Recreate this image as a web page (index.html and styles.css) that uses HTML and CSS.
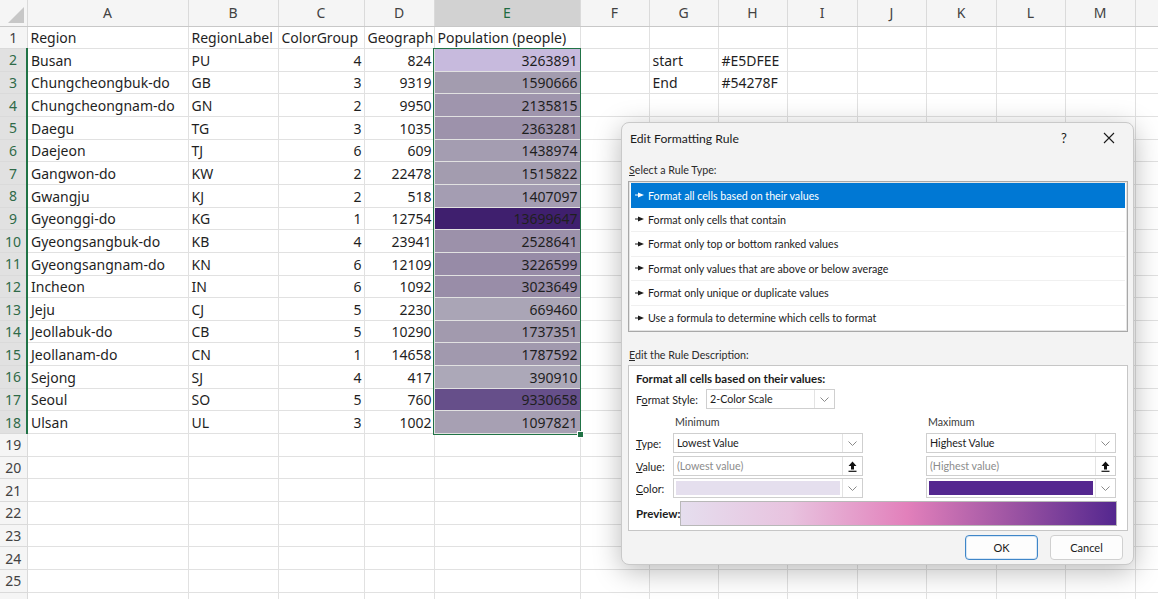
FILE: index.html
```html
<!DOCTYPE html>
<html>
<head>
<meta charset="utf-8">
<link rel="stylesheet" href="styles.css">
</head>
<body>
<div class="app">
<table class="sheet">
<colgroup>
<col class="c-rh"><col class="c-a"><col class="c-b"><col class="c-c"><col class="c-d"><col class="c-e"><col class="c-s"><col class="c-s"><col class="c-s"><col class="c-t"><col class="c-s"><col class="c-t"><col class="c-s"><col class="c-t"><col class="c-s">
</colgroup>
<tr class="hdr"><th class="corner"><span class="tri"></span></th><th>A</th><th>B</th><th>C</th><th>D</th><th class="hsel">E</th><th>F</th><th>G</th><th>H</th><th>I</th><th>J</th><th>K</th><th>L</th><th>M</th><th></th></tr>
<tr><th>1</th><td>Region</td><td>RegionLabel</td><td>ColorGroup</td><td><span class="clipin">Geographi</span></td><td>Population (people)</td><td></td><td></td><td></td><td></td><td></td><td></td><td></td><td></td><td></td></tr>
<tr><th class="rs">2</th><td>Busan</td><td>PU</td><td class="n">4</td><td class="n">824</td><td class="n" style="background:#c7badd">3263891</td><td></td><td>start</td><td>#E5DFEE</td><td></td><td></td><td></td><td></td><td></td><td></td></tr>
<tr><th class="rs">3</th><td>Chungcheongbuk-do</td><td>GB</td><td class="n">3</td><td class="n">9319</td><td class="n" style="background:#a39caf">1590666</td><td></td><td>End</td><td>#54278F</td><td></td><td></td><td></td><td></td><td></td><td></td></tr>
<tr><th class="rs">4</th><td>Chungcheongnam-do</td><td>GN</td><td class="n">2</td><td class="n">9950</td><td class="n" style="background:#9f95ad">2135815</td><td></td><td></td><td></td><td></td><td></td><td></td><td></td><td></td><td></td></tr>
<tr><th class="rs">5</th><td>Daegu</td><td>TG</td><td class="n">3</td><td class="n">1035</td><td class="n" style="background:#9d92ab">2363281</td><td></td><td></td><td></td><td></td><td></td><td></td><td></td><td></td><td></td></tr>
<tr><th class="rs">6</th><td>Daejeon</td><td>TJ</td><td class="n">6</td><td class="n">609</td><td class="n" style="background:#a49db1">1438974</td><td></td><td></td><td></td><td></td><td></td><td></td><td></td><td></td><td></td></tr>
<tr><th class="rs">7</th><td>Gangwon-do</td><td>KW</td><td class="n">2</td><td class="n">22478</td><td class="n" style="background:#a39caf">1515822</td><td></td><td></td><td></td><td></td><td></td><td></td><td></td><td></td><td></td></tr>
<tr><th class="rs">8</th><td>Gwangju</td><td>KJ</td><td class="n">2</td><td class="n">518</td><td class="n" style="background:#a49db2">1407097</td><td></td><td></td><td></td><td></td><td></td><td></td><td></td><td></td><td></td></tr>
<tr><th class="rs">9</th><td>Gyeonggi-do</td><td>KG</td><td class="n">1</td><td class="n">12754</td><td class="n" style="background:#3f1f6e">13699647</td><td></td><td></td><td></td><td></td><td></td><td></td><td></td><td></td><td></td></tr>
<tr><th class="rs">10</th><td>Gyeongsangbuk-do</td><td>KB</td><td class="n">4</td><td class="n">23941</td><td class="n" style="background:#9c91aa">2528641</td><td></td><td></td><td></td><td></td><td></td><td></td><td></td><td></td><td></td></tr>
<tr><th class="rs">11</th><td>Gyeongsangnam-do</td><td>KN</td><td class="n">6</td><td class="n">12109</td><td class="n" style="background:#978ba7">3226599</td><td></td><td></td><td></td><td></td><td></td><td></td><td></td><td></td><td></td></tr>
<tr><th class="rs">12</th><td>Incheon</td><td>IN</td><td class="n">6</td><td class="n">1092</td><td class="n" style="background:#998da8">3023649</td><td></td><td></td><td></td><td></td><td></td><td></td><td></td><td></td><td></td></tr>
<tr><th class="rs">13</th><td>Jeju</td><td>CJ</td><td class="n">5</td><td class="n">2230</td><td class="n" style="background:#aaa5b6">669460</td><td></td><td></td><td></td><td></td><td></td><td></td><td></td><td></td><td></td></tr>
<tr><th class="rs">14</th><td>Jeollabuk-do</td><td>CB</td><td class="n">5</td><td class="n">10290</td><td class="n" style="background:#a29aae">1737351</td><td></td><td></td><td></td><td></td><td></td><td></td><td></td><td></td><td></td></tr>
<tr><th class="rs">15</th><td>Jeollanam-do</td><td>CN</td><td class="n">1</td><td class="n">14658</td><td class="n" style="background:#a199ae">1787592</td><td></td><td></td><td></td><td></td><td></td><td></td><td></td><td></td><td></td></tr>
<tr><th class="rs">16</th><td>Sejong</td><td>SJ</td><td class="n">4</td><td class="n">417</td><td class="n" style="background:#aca8b8">390910</td><td></td><td></td><td></td><td></td><td></td><td></td><td></td><td></td><td></td></tr>
<tr><th class="rs">17</th><td>Seoul</td><td>SO</td><td class="n">5</td><td class="n">760</td><td class="n" style="background:#664f8a">9330658</td><td></td><td></td><td></td><td></td><td></td><td></td><td></td><td></td><td></td></tr>
<tr><th class="rs">18</th><td>Ulsan</td><td>UL</td><td class="n">3</td><td class="n">1002</td><td class="n" style="background:#a7a0b3">1097821</td><td></td><td></td><td></td><td></td><td></td><td></td><td></td><td></td><td></td></tr>
<tr><th>19</th><td></td><td></td><td></td><td></td><td></td><td></td><td></td><td></td><td></td><td></td><td></td><td></td><td></td><td></td></tr>
<tr><th>20</th><td></td><td></td><td></td><td></td><td></td><td></td><td></td><td></td><td></td><td></td><td></td><td></td><td></td><td></td></tr>
<tr><th>21</th><td></td><td></td><td></td><td></td><td></td><td></td><td></td><td></td><td></td><td></td><td></td><td></td><td></td><td></td></tr>
<tr><th>22</th><td></td><td></td><td></td><td></td><td></td><td></td><td></td><td></td><td></td><td></td><td></td><td></td><td></td><td></td></tr>
<tr><th>23</th><td></td><td></td><td></td><td></td><td></td><td></td><td></td><td></td><td></td><td></td><td></td><td></td><td></td><td></td></tr>
<tr><th>24</th><td></td><td></td><td></td><td></td><td></td><td></td><td></td><td></td><td></td><td></td><td></td><td></td><td></td><td></td></tr>
<tr><th>25</th><td></td><td></td><td></td><td></td><td></td><td></td><td></td><td></td><td></td><td></td><td></td><td></td><td></td><td></td></tr>
<tr><th></th><td></td><td></td><td></td><td></td><td></td><td></td><td></td><td></td><td></td><td></td><td></td><td></td><td></td><td></td></tr>
</table>

<div class="selection"><span class="handle"></span></div>

<div class="dialog">
  <div class="titlebar">
    <span class="title">Edit Formatting Rule</span>
    <span class="help">?</span>
    <svg class="close" width="12" height="12" viewBox="0 0 12 12"><path d="M1 1L11 11M11 1L1 11" stroke="#1a1a1a" stroke-width="1.1" fill="none"/></svg>
  </div>
  <div class="body">
    <div class="label"><u>S</u>elect a Rule Type:</div>
    <div class="list">
      <div class="item active"><svg class="arr" width="9" height="6" viewBox="0 0 9 6"><path d="M0 3H4" stroke="currentColor" stroke-width="1"/><path d="M3 0.6L9 3L3 5.4Z" fill="currentColor"/></svg>Format all cells based on their values</div>
      <div class="item"><svg class="arr" width="9" height="6" viewBox="0 0 9 6"><path d="M0 3H4" stroke="currentColor" stroke-width="1"/><path d="M3 0.6L9 3L3 5.4Z" fill="currentColor"/></svg>Format only cells that contain</div>
      <div class="item"><svg class="arr" width="9" height="6" viewBox="0 0 9 6"><path d="M0 3H4" stroke="currentColor" stroke-width="1"/><path d="M3 0.6L9 3L3 5.4Z" fill="currentColor"/></svg>Format only top or bottom ranked values</div>
      <div class="item"><svg class="arr" width="9" height="6" viewBox="0 0 9 6"><path d="M0 3H4" stroke="currentColor" stroke-width="1"/><path d="M3 0.6L9 3L3 5.4Z" fill="currentColor"/></svg>Format only values that are above or below average</div>
      <div class="item"><svg class="arr" width="9" height="6" viewBox="0 0 9 6"><path d="M0 3H4" stroke="currentColor" stroke-width="1"/><path d="M3 0.6L9 3L3 5.4Z" fill="currentColor"/></svg>Format only unique or duplicate values</div>
      <div class="item last"><svg class="arr" width="9" height="6" viewBox="0 0 9 6"><path d="M0 3H4" stroke="currentColor" stroke-width="1"/><path d="M3 0.6L9 3L3 5.4Z" fill="currentColor"/></svg>Use a formula to determine which cells to format</div>
    </div>
    <div class="label label2"><u>E</u>dit the Rule Description:</div>
    <div class="desc">
      <div class="heading">Format all cells based on their values:</div>
      <div class="stylerow">
        <span class="flabel">F<u>o</u>rmat Style:</span>
        <div class="combo combo-style"><span class="ctext">2-Color Scale</span><span class="cbtn"><svg width="9" height="5" viewBox="0 0 9 5"><path d="M0.5 0.5L4.5 4.5L8.5 0.5" stroke="#8a8a8a" fill="none" stroke-width="1"/></svg></span></div>
      </div>
      <div class="grid">
        <span></span><span class="colhead">Minimum</span><span></span><span class="colhead">Maximum</span>

        <span class="flabel"><u>T</u>ype:</span>
        <div class="combo"><span class="ctext">Lowest Value</span><span class="cbtn"><svg width="9" height="5" viewBox="0 0 9 5"><path d="M0.5 0.5L4.5 4.5L8.5 0.5" stroke="#8a8a8a" fill="none" stroke-width="1"/></svg></span></div>
        <span></span>
        <div class="combo"><span class="ctext">Highest Value</span><span class="cbtn"><svg width="9" height="5" viewBox="0 0 9 5"><path d="M0.5 0.5L4.5 4.5L8.5 0.5" stroke="#8a8a8a" fill="none" stroke-width="1"/></svg></span></div>

        <span class="flabel"><u>V</u>alue:</span>
        <div class="combo"><span class="ctext ph">(Lowest value)</span><span class="ubtn"><svg width="9" height="11" viewBox="0 0 9 11"><path d="M4.5 0.5L8.5 5H6V8.5H3V5H0.5Z" fill="#111"/><path d="M0.5 10.3H8.5" stroke="#111" stroke-width="1.2"/></svg></span></div>
        <span></span>
        <div class="combo"><span class="ctext ph">(Highest value)</span><span class="ubtn"><svg width="9" height="11" viewBox="0 0 9 11"><path d="M4.5 0.5L8.5 5H6V8.5H3V5H0.5Z" fill="#111"/><path d="M0.5 10.3H8.5" stroke="#111" stroke-width="1.2"/></svg></span></div>

        <span class="flabel"><u>C</u>olor:</span>
        <div class="combo"><span class="swatch sw-min"></span><span class="cbtn"><svg width="9" height="5" viewBox="0 0 9 5"><path d="M0.5 0.5L4.5 4.5L8.5 0.5" stroke="#8a8a8a" fill="none" stroke-width="1"/></svg></span></div>
        <span></span>
        <div class="combo"><span class="swatch sw-max"></span><span class="cbtn"><svg width="9" height="5" viewBox="0 0 9 5"><path d="M0.5 0.5L4.5 4.5L8.5 0.5" stroke="#8a8a8a" fill="none" stroke-width="1"/></svg></span></div>
      </div>
      <div class="preview">
        <span class="plabel">Preview:</span>
        <div class="pbar"></div>
      </div>
    </div>
    <div class="buttons">
      <button class="btn ok">OK</button>
      <button class="btn">Cancel</button>
    </div>
  </div>
</div>
</div>
</body>
</html>
```

FILE: styles.css
```css
html, body {
  margin: 0;
  padding: 0;
  background: #ffffff;
  overflow: hidden;
}
.app {
  position: relative;
  width: 1158px;
  height: 599px;
  overflow: hidden;
  font-family: "Noto Sans", "Open Sans", sans-serif;
}
.sheet {
  border-collapse: collapse;
  table-layout: fixed;
  width: 1165px;
  font-size: 14px;
  color: #1f1f1f;
}
.c-rh { width: 27px; }
.c-a { width: 161px; }
.c-b { width: 90px; }
.c-c { width: 86px; }
.c-d { width: 70px; }
.c-e { width: 146px; }
.c-s { width: 69px; }
.c-t { width: 70px; }
.sheet tr { height: 22.65px; }
.sheet tr.hdr { height: 26px; }
.sheet td {
  border-right: 1px solid #e1e1e1;
  border-bottom: 1px solid #e1e1e1;
  padding: 0 2px 0 3px;
  white-space: nowrap;
  overflow: hidden;
  line-height: 20px;
  vertical-align: bottom;
}
.sheet td.n { text-align: right; }
.clipin {
  display: block;
  width: 66px;
  overflow: hidden;
  white-space: nowrap;
}
.sheet th {
  background: #f5f5f5;
  color: #424242;
  font-weight: normal;
  border-right: 1px solid #dadada;
  border-bottom: 1px solid #dadada;
  padding: 0;
  text-align: center;
  font-size: 14px;
}
.sheet tr.hdr th {
  border-bottom: 1px solid #c8c8c8;
}
.sheet th.corner {
  position: relative;
}
.tri {
  position: absolute;
  right: 3px;
  bottom: 3px;
  width: 0;
  height: 0;
  border-left: 16px solid transparent;
  border-bottom: 16px solid #c7c7c7;
}
.sheet th.hsel {
  background: #d2d2d2;
  color: #1e6b41;
  border-bottom: 2px solid #217346;
}
.sheet th.rs {
  background: #e1e1e1;
  color: #2f6a48;
  border-right: 2px solid #217346;
}
.selection {
  position: absolute;
  left: 433px;
  top: 48px;
  width: 146px;
  height: 385px;
  border: 1px solid #217346;
  pointer-events: none;
}
.handle {
  position: absolute;
  right: -4px;
  bottom: -4px;
  width: 5px;
  height: 5px;
  background: #217346;
  border: 1px solid #ffffff;
}

/* Dialog */
.dialog {
  position: absolute;
  left: 621px;
  top: 122px;
  width: 511px;
  height: 441px;
  background: #f3f3f3;
  border: 1px solid #c9c9c9;
  border-radius: 8px;
  box-shadow: 0 6px 28px rgba(0, 0, 0, 0.28);
  font-family: "Lato", "Noto Sans", sans-serif;
  font-size: 10.7px;
  color: #1b1b1b;
  display: flex;
  flex-direction: column;
}
.titlebar {
  height: 30px;
  display: flex;
  align-items: center;
  padding: 0 0 0 8px;
}
.title {
  font-size: 12.2px;
  flex: 1;
  padding-top: 1px;
}
.help {
  font-size: 13px;
  width: 14px;
  margin-right: 28px;
}
.close {
  margin-right: 18px;
}
.body {
  padding: 0 5px 0 6px;
  display: flex;
  flex-direction: column;
}
.label {
  height: 28px;
  line-height: 18px;
  padding-top: 8px;
  box-sizing: border-box;
  padding-left: 1px;
  color: #2b2b2b;
}
.label u, .flabel u { text-decoration-thickness: 1px; text-underline-offset: 1px; }
.label2 {
  height: 33px;
  padding-top: 14px;
}
.list {
  background: #ffffff;
  border: 1px solid #a8a8a8;
  box-shadow: inset 0 0 0 1px #e4e4e4;
  height: 151px;
  box-sizing: border-box;
  padding: 1px 2px;
  display: flex;
  flex-direction: column;
}
.item {
  height: 24.7px;
  display: flex;
  align-items: center;
  gap: 4px;
  padding-left: 4px;
  border-bottom: 1px solid #f0f0f0;
  box-sizing: border-box;
  color: #1b1b1b;
}
.item.last { border-bottom: none; }
.item.active {
  background: #0078d4;
  color: #ffffff;
  border-bottom: none;
}
.arr { flex: none; }
.desc {
  background: #ffffff;
  border: 1px solid #c6c6c6;
  height: 166px;
  box-sizing: border-box;
  padding: 5px 10px 0 7px;
  display: flex;
  flex-direction: column;
}
.heading {
  font-weight: bold;
  font-size: 11.5px;
  line-height: 16px;
  height: 16px;
}
.stylerow {
  display: flex;
  align-items: center;
  height: 22px;
  margin-top: 1px;
}
.stylerow .flabel {
  width: 70px;
}
.combo {
  display: flex;
  align-items: stretch;
  height: 20px;
  border: 1px solid #cfcfcf;
  box-sizing: border-box;
  background: #ffffff;
}
.combo-style {
  width: 129px;
}
.ctext {
  flex: 1;
  padding-left: 3px;
  line-height: 18px;
  white-space: nowrap;
  overflow: hidden;
}
.ph { color: #8c8c8c; }
.cbtn, .ubtn {
  width: 19px;
  flex: none;
  display: flex;
  align-items: center;
  justify-content: center;
  border-left: 1px solid #e3e3e3;
}
.grid {
  display: grid;
  grid-template-columns: 37px 190px 63px 190px;
  grid-template-rows: 22px 22px 24px 20px;
  align-items: center;
}
.colhead {
  color: #3a3a3a;
  padding-left: 2px;
  padding-top: 1px;
}
.swatch {
  flex: 1;
  margin: 2px;
}
.sw-min { background: #e5dfee; }
.sw-max { background: #54278f; }
.preview {
  display: flex;
  align-items: center;
  margin-top: 2px;
  height: 26px;
}
.plabel {
  font-weight: bold;
  font-size: 11.5px;
  width: 44px;
  white-space: nowrap;
}
.pbar {
  flex: 1;
  height: 25px;
  border: 1px solid #b8b8b8;
  box-sizing: border-box;
  background: linear-gradient(to right, #e5deee 0%, #e8c3df 25%, #e280bb 52%, #a056a4 75%, #54278f 100%);
}
.buttons {
  display: flex;
  justify-content: flex-end;
  gap: 12px;
  padding: 4px 5px 0 0;
}
.btn {
  width: 73px;
  height: 25px;
  background: #fdfdfd;
  border: 1px solid #d0d0d0;
  border-radius: 4px;
  font-family: "Lato", "Noto Sans", sans-serif;
  font-size: 11px;
  color: #1b1b1b;
  padding: 0;
}
.btn.ok {
  border-color: #3f86c8;
  box-shadow: inset 0 0 0 1px #d7e7f6;
}
```
